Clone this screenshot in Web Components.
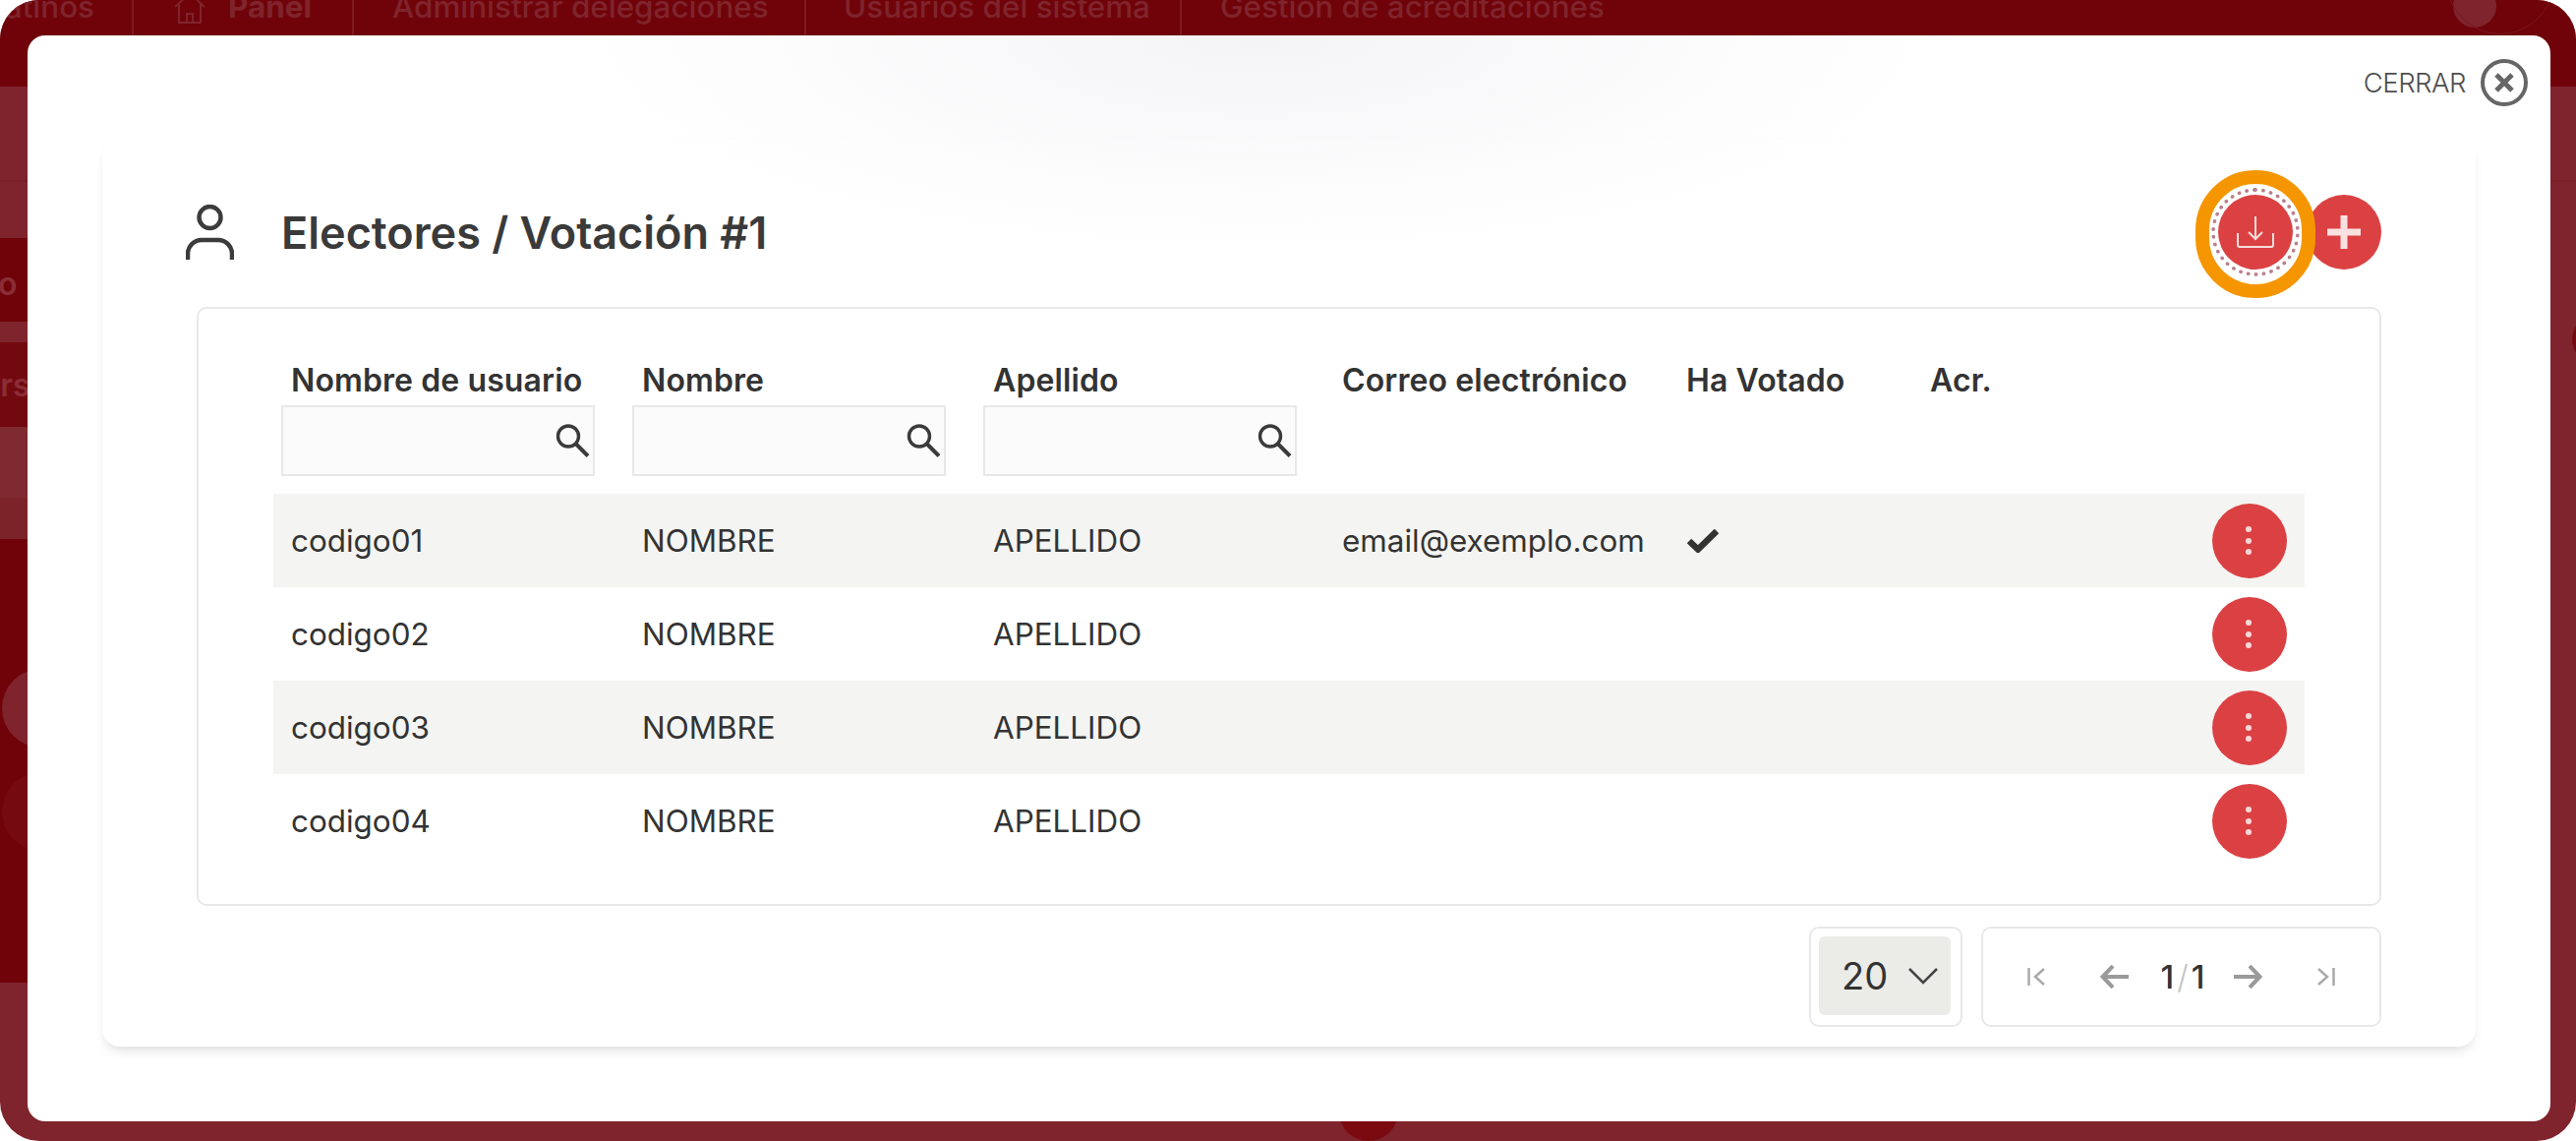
<!DOCTYPE html>
<html lang="es">
<head>
<meta charset="utf-8">
<title>Electores</title>
<style>
    html, body { margin: 0; background: #fff; }
    body { width: 2620px; height: 1160px; overflow: hidden; font-family: Inter, "Liberation Sans", sans-serif; color: #333; }
</style>
</head>
<body>
<app-backdrop>
    <modal-window>
        <voter-card heading="Electores / Votación #1">
            <voter-table>
                <voter-row user="codigo01" first="NOMBRE" last="APELLIDO" email="email@exemplo.com" voted></voter-row>
                <voter-row user="codigo02" first="NOMBRE" last="APELLIDO"></voter-row>
                <voter-row user="codigo03" first="NOMBRE" last="APELLIDO"></voter-row>
                <voter-row user="codigo04" first="NOMBRE" last="APELLIDO"></voter-row>
            </voter-table>
            <table-footer></table-footer>
        </voter-card>
    </modal-window>
</app-backdrop>

<script>
class AppBackdrop extends HTMLElement {
    constructor() {
        super();
        this.attachShadow({ mode: "open" });
        this.shadowRoot.innerHTML = `
            <style>
                :host {
                    display: block;
                    position: relative;
                    width: 2620px;
                    height: 1160px;
                    overflow: hidden;
                    border-radius: 40px;
                    background: #7f242c;
                }
                nav {
                    display: flex;
                    height: 88px;
                    background: #6f0309;
                    color: #7f242c;
                    font-size: 31.4px;
                    font-weight: 500;
                    line-height: 38px;
                    justify-content: flex-start;
                }
                nav div {
                    box-sizing: border-box;
                    border-right: 2px solid #7c1a22;
                    margin-top: -12px;
                    white-space: nowrap;
                    display: flex;
                    gap: 24px;
                    align-items: flex-start;
                }
                nav div.plain { border: 0; }
                nav .a { width: 136px; justify-content: flex-end; padding-right: 38px; }
                nav .b { width: 224px; padding-left: 42px; font-weight: 700; }
                nav .c { width: 460px; padding-left: 39px; }
                nav .d { width: 382px; padding-left: 38px; }
                nav .e { padding-left: 39px; }
                nav svg { margin-top: 12px; flex: none; }
                .rule { height: 97px; border-bottom: 2px solid #7a2027; box-sizing: border-box; }
                .side { position: absolute; left: 0; top: 242px; width: 60px; font-size: 32px; font-weight: 600; color: #8a2d35; overflow: hidden; }
                .side div { overflow: hidden; white-space: nowrap; }
                .dot { position: absolute; border-radius: 50%; }
            </style>
            <nav>
                <div class="a">Latinos</div>
                <div class="b"><svg width="30" height="24" viewBox="0 0 30 24" fill="none" stroke="currentColor" stroke-width="2"><path d="M0 7 L15 -7 L30 7 M4 4 V23 H26 V4 M12 23 V14 H18 V23"/></svg>Panel</div>
                <div class="c">Administrar delegaciones</div>
                <div class="d">Usuarios del sistema</div>
                <div class="e plain">Gestión de acreditaciones</div>
            </nav>
            <div class="rule"></div>
            <div class="side">
                <div style="height:85px;background:#6f0309;line-height:93px;margin-left:-2px">o</div>
                <div style="height:21px"></div>
                <div style="height:86px;background:#730910;line-height:88px;margin-left:-38px;padding-left:0;width:98px">curs</div>
                <div style="height:72px;background:#7f2a30"></div>
                <div style="height:42px;background:#7c2329"></div>
                <div style="height:451px;background:#6f0309"></div>
            </div>
            <span class="dot" style="left:2px;top:680px;width:80px;height:80px;background:#7f242c"></span>
            <span class="dot" style="left:2px;top:785px;width:80px;height:80px;background:#760a11"></span>
            <span class="dot" style="left:2495px;top:-16px;width:44px;height:44px;background:#7f242c"></span>
            <span class="dot" style="left:2488px;top:-75px;width:110px;height:110px;box-sizing:border-box;border:1px solid #7a1820"></span>
            <span class="dot" style="left:2616px;top:320px;width:50px;height:50px;background:#760a11"></span>
            <span class="dot" style="left:1362px;top:1100px;width:60px;height:60px;background:#7a0a10"></span>
            <slot></slot>
        `;
    }
}

class ModalWindow extends HTMLElement {
    constructor() {
        super();
        this.attachShadow({ mode: "open" });
        this.shadowRoot.innerHTML = `
            <style>
                :host {
                    position: absolute;
                    left: 28px;
                    top: 36px;
                    width: 2566px;
                    height: 1104px;
                    display: flex;
                    flex-direction: column;
                    border-radius: 18px;
                    background: radial-gradient(ellipse 720px 230px at 1252px 0, #f4f4f6, #fdfdfe 75%, #fff);
                }
                header {
                    height: 96px;
                    margin-bottom: 10px;
                    padding-right: 23px;
                    display: flex;
                    justify-content: flex-end;
                    align-items: center;
                    gap: 15px;
                    font-size: 27.5px;
                    font-weight: 300;
                    letter-spacing: -0.5px;
                    color: #4e4e4e;
                }
                svg { display: block; }
            </style>
            <header>
                <span>CERRAR</span>
                <svg width="48" height="48" viewBox="0 0 48 48" fill="none" stroke="#666">
                    <circle cx="24" cy="24" r="22" stroke-width="4"/>
                    <path d="M16 16 L32 32 M32 16 L16 32" stroke-width="5"/>
                </svg>
            </header>
            <slot></slot>
        `;
    }
}

class RoundButton extends HTMLElement {
    constructor() {
        super();
        this.attachShadow({ mode: "open" });
        this.shadowRoot.innerHTML = `
            <style>
                :host {
                    position: relative;
                    display: flex;
                    width: 76px;
                    height: 76px;
                    flex: none;
                    align-items: center;
                    justify-content: center;
                    border-radius: 50%;
                    background: #db4143;
                }
                :host([focused]) { z-index: 1; }
                :host([focused])::before {
                    content: "";
                    position: absolute;
                    inset: -7px;
                    border: 4px dotted #b9818c;
                    border-radius: 50%;
                    box-sizing: border-box;
                }
                :host([focused])::after {
                    content: "";
                    position: absolute;
                    left: -23px;
                    top: -25px;
                    width: 94px;
                    height: 102px;
                    border: 14px solid #f59600;
                    border-radius: 61px;
                }
                ::slotted(svg) { display: block; }
            </style>
            <slot></slot>
        `;
    }
}

class VoterCard extends HTMLElement {
    constructor() {
        super();
        this.attachShadow({ mode: "open" });
        this.shadowRoot.innerHTML = `
            <style>
                :host {
                    display: block;
                    box-sizing: border-box;
                    margin: 0 76px;
                    height: 922px;
                    padding-top: 56px;
                    border-radius: 18px;
                    box-shadow: 0 8px 12px -4px rgba(0, 0, 0, 0.12), 0 1px 7px rgba(0, 0, 0, 0.02);
                }
                header {
                    height: 76px;
                    margin: 0 96px 38px 85px;
                    display: flex;
                    align-items: center;
                }
                h1 {
                    margin: 0 auto 0 48px;
                    font-size: 45px;
                    font-weight: 600;
                    color: #3a3a3a;
                }
                .actions { display: flex; gap: 14px; }
                .body { margin: 0 96px; }
            </style>
            <header>
                <svg width="49" height="56" viewBox="0 0 49 56" fill="none" stroke="#3c3c3c" stroke-width="4.5">
                    <circle cx="24.5" cy="13" r="11"/>
                    <path d="M2 56 V50 A14 14 0 0 1 16 36 H33 A14 14 0 0 1 47 50 V56"/>
                </svg>
                <h1></h1>
                <div class="actions">
                    <round-button focused>
                        <svg width="38" height="32" viewBox="0 0 38 32" fill="none" stroke="#f8dcdc" stroke-width="2">
                            <path d="M19 0 V23 M12 16 L19 23 L26 16 M1 17 V29 Q1 31 3 31 H35 Q37 31 37 29 V17"/>
                        </svg>
                    </round-button>
                    <round-button>
                        <svg width="34" height="34" viewBox="0 0 34 34" fill="none" stroke="#f9e1e1" stroke-width="7">
                            <path d="M17 0 V34 M0 17 H34"/>
                        </svg>
                    </round-button>
                </div>
            </header>
            <div class="body"><slot></slot></div>
        `;
    }

    connectedCallback() {
        this.shadowRoot.querySelector("h1").textContent = this.getAttribute("heading") || "";
    }
}

class FilterInput extends HTMLElement {
    constructor() {
        super();
        this.attachShadow({ mode: "open" });
        this.shadowRoot.innerHTML = `
            <style>
                :host {
                    display: flex;
                    box-sizing: border-box;
                    width: 319px;
                    height: 72px;
                    margin-left: 8px;
                    padding-right: 4px;
                    align-items: center;
                    justify-content: flex-end;
                    background: #fbfbfb;
                    border: 2px solid #e8e8e8;
                }
            </style>
            <svg width="34" height="34" viewBox="0 0 34 34" fill="none" stroke="#3a3a3a" stroke-width="3.4">
                <circle cx="13" cy="12.5" r="10.5"/>
                <path d="M20.5 20 L33 32.5" stroke-width="4"/>
            </svg>
        `;
    }
}

class VoterTable extends HTMLElement {
    constructor() {
        super();
        this.attachShadow({ mode: "open" });
        this.shadowRoot.innerHTML = `
            <style>
                :host {
                    display: block;
                    box-sizing: border-box;
                    height: 609px;
                    padding: 53px 76px 0;
                    border: 2px solid #e8e8e8;
                    border-radius: 10px;
                    --cols: 357px 357px 355px 350px 248px 1fr;
                }
                .head {
                    display: grid;
                    grid-template-columns: var(--cols);
                    height: 117px;
                    margin-bottom: 18px;
                    font-size: 32px;
                    font-weight: 600;
                    line-height: 40px;
                    letter-spacing: 0.1px;
                    color: #333;
                    white-space: nowrap;
                }
                .head > div > span { display: block; padding-left: 18px; margin-bottom: 5px; }
            </style>
            <div class="head">
                <div><span>Nombre de usuario</span><filter-input></filter-input></div>
                <div><span>Nombre</span><filter-input></filter-input></div>
                <div><span>Apellido</span><filter-input></filter-input></div>
                <div><span>Correo electrónico</span></div>
                <div><span>Ha Votado</span></div>
                <div><span>Acr.</span></div>
            </div>
            <slot></slot>
        `;
    }
}

class VoterRow extends HTMLElement {
    constructor() {
        super();
        this.attachShadow({ mode: "open" });
        this.shadowRoot.innerHTML = `
            <style>
                :host {
                    display: grid;
                    grid-template-columns: var(--cols);
                    height: 95px;
                    align-items: center;
                    font-size: 31.4px;
                    color: #333;
                    white-space: nowrap;
                }
                :host(:nth-of-type(odd)) { background: #f4f4f2; }
                .cell { padding-left: 18px; }
                .actions { display: flex; justify-content: flex-end; padding-right: 18px; }
                .dots { display: flex; flex-direction: column; gap: 5.5px; margin-left: -2px; }
                .dots i { width: 6px; height: 6px; border-radius: 50%; background: #f6d8d8; }
                svg { display: block; margin-left: 1px; }
            </style>
            <div class="cell user"></div>
            <div class="cell first"></div>
            <div class="cell last"></div>
            <div class="cell email"></div>
            <div class="cell voted"></div>
            <div class="actions">
                <round-button><span class="dots"><i></i><i></i><i></i></span></round-button>
            </div>
        `;
    }

    connectedCallback() {
        for (const name of ["user", "first", "last", "email"]) {
            this.shadowRoot.querySelector("." + name).textContent = this.getAttribute(name) || "";
        }
        if (this.hasAttribute("voted")) {
            this.shadowRoot.querySelector(".voted").innerHTML = `
                <svg width="32" height="24" viewBox="0 0 32 24" fill="none" stroke="#333" stroke-width="6.5">
                    <path d="M2 12 L11 20.5 L30 2"/>
                </svg>`;
        }
    }
}

class TableFooter extends HTMLElement {
    constructor() {
        super();
        this.attachShadow({ mode: "open" });
        this.shadowRoot.innerHTML = `
            <style>
                :host {
                    display: flex;
                    justify-content: flex-end;
                    gap: 19px;
                    margin-top: 21px;
                    height: 102px;
                }
                .box {
                    box-sizing: border-box;
                    border: 2px solid #e8e8e8;
                    border-radius: 10px;
                }
                .size { width: 156px; padding: 8px 10px 8px 8px; }
                .select {
                    height: 80px;
                    padding-left: 23px;
                    display: flex;
                    align-items: center;
                    gap: 21px;
                    border-radius: 6px;
                    background: #ebebe8;
                    font-size: 38px;
                    color: #333;
                }
                .pager {
                    width: 407px;
                    padding-left: 45px;
                    display: flex;
                    align-items: center;
                }
                .first { margin-right: 56px; }
                .prev { margin-right: 32px; }
                .count { width: 52px; margin-left: -3px; margin-right: 26px; font-size: 33px; font-weight: 500; color: #333; white-space: nowrap; text-align: center; }
                .count span { color: #c4c4c4; font-weight: 300; margin: 0 3px; }
                .next { margin-right: 56px; }
                svg { display: block; flex: none; }
            </style>
            <div class="box size">
                <div class="select">
                    <span>20</span>
                    <svg width="30" height="17" viewBox="0 0 30 17" fill="none" stroke="#444" stroke-width="2.5"><path d="M1 1 L15 15 L29 1"/></svg>
                </div>
            </div>
            <div class="box pager">
                <svg class="first" width="18" height="18" viewBox="0 0 18 18" fill="none" stroke="#aaa" stroke-width="2.5"><path d="M1.5 0 V18 M17 1 L8 9 L17 17"/></svg>
                <svg class="prev" width="29" height="24" viewBox="0 0 29 24" fill="none" stroke="#9a9a9a" stroke-width="4"><path d="M29 12 H3 M13 1 L2.5 12 L13 23"/></svg>
                <div class="count">1<span>/</span>1</div>
                <svg class="next" width="29" height="24" viewBox="0 0 29 24" fill="none" stroke="#9a9a9a" stroke-width="4"><path d="M0 12 H26 M16 1 L26.5 12 L16 23"/></svg>
                <svg width="18" height="18" viewBox="0 0 18 18" fill="none" stroke="#aaa" stroke-width="2.5"><path d="M16.5 0 V18 M1 1 L10 9 L1 17"/></svg>
            </div>
        `;
    }
}

customElements.define("app-backdrop", AppBackdrop);
customElements.define("modal-window", ModalWindow);
customElements.define("round-button", RoundButton);
customElements.define("voter-card", VoterCard);
customElements.define("filter-input", FilterInput);
customElements.define("voter-table", VoterTable);
customElements.define("voter-row", VoterRow);
customElements.define("table-footer", TableFooter);
</script>
</body>
</html>
